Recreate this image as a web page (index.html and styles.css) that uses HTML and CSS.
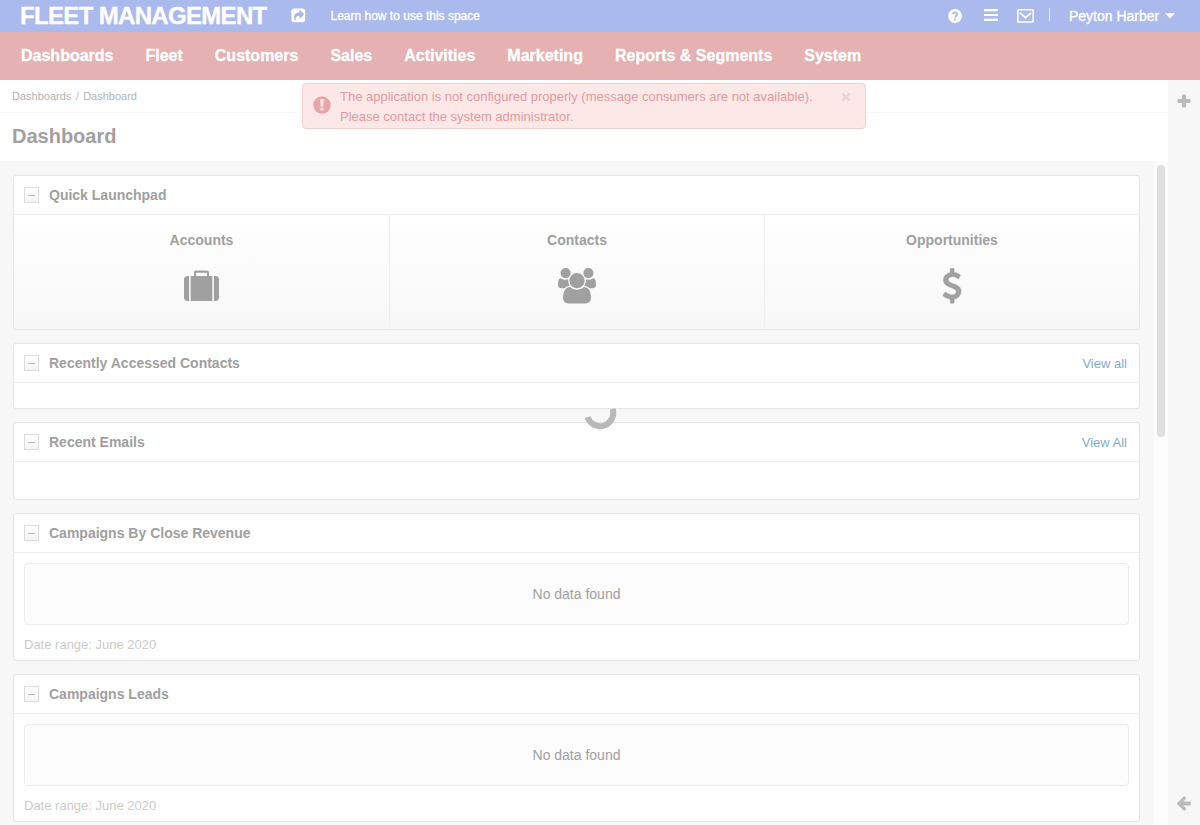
FILE: index.html
```html
<!DOCTYPE html>
<html lang="en">
<head>
<meta charset="utf-8">
<title>Dashboard - Fleet Management</title>
<link rel="stylesheet" href="styles.css">
</head>
<body>
<header class="topbar">
  <span class="brand">FLEET MANAGEMENT</span>
  <svg class="icon-share" width="15" height="15" viewBox="0 0 15 15"><path fill="#fff" fill-rule="evenodd" d="M3.200.5h8.200a2.800 2.800 0 0 1 2.800 2.800v8.200a2.800 2.800 0 0 1-2.800 2.800H3.200a2.800 2.800 0 0 1-2.800-2.800V3.300A2.800 2.800 0 0 1 3.200.5zM8.400 2.500v1.900C4.600 4.500 2.800 6.400 3 9.300c.1 1.500.7 2.500 1.700 3.100.4.200.6 0 .4-.4C4.200 9.400 5 8 8.400 7.900v2.200c0 .5.400.6.8.3l3.600-3.700c.3-.3.3-.6 0-.9L9.200 2.200c-.4-.3-.8-.2-.8.3z"/></svg>
  <a class="learn">Learn how to use this space</a>
  <div class="tools">
    <svg class="icon-help" width="14" height="14" viewBox="0 0 14 14"><circle cx="7" cy="7" r="6.900" fill="#fff"/><path d="M4.700 5.200C5.100 3.900 6 3.400 7.100 3.400c1.300 0 2.200.8 2.200 1.800 0 1.500-2.200 1.600-2.200 3.300" fill="none" stroke="#abbaed" stroke-width="1.800"/><path fill="#abbaed" d="M6.100 9.500h1.900v1.800H6.100z"/></svg>
    <svg class="icon-menu" width="14" height="12" viewBox="0 0 14 12"><path fill="#fff" d="M0 0h14v2.200H0zM0 4.900h14v2.200H0zM0 9.800h14V12H0z"/></svg>
    <svg class="icon-mail" width="17" height="14" viewBox="0 0 17 14"><rect x=".8" y=".8" width="15.400" height="12.200" rx=".8" fill="none" stroke="#fff" stroke-width="1.600"/><path d="M3 3.800l5.500 4.900L14 3.800" fill="none" stroke="#fff" stroke-width="1.800"/></svg>
    <span class="divider"></span>
    <a class="user">Peyton Harber</a>
    <svg class="icon-caret" width="10" height="6" viewBox="0 0 10 6"><path fill="#fff" d="M.8.300h8.400c.5 0 .6.500.3.800L5.500 5.100c-.3.300-.7.300-1 0L.5 1.100C.2.800.3.300.8.300z"/></svg>
  </div>
</header>
<nav class="nav">
  <a>Dashboards</a><a>Fleet</a><a>Customers</a><a>Sales</a><a>Activities</a><a>Marketing</a><a>Reports &amp; Segments</a><a>System</a>
</nav>
<div class="body">
  <main class="page">
    <div class="crumbs"><span>Dashboards</span><span>/</span><span>Dashboard</span></div>
    <h1 class="title">Dashboard</h1>
    <div class="scroll">
      <div class="widgets">
        <section class="card launchpad">
          <div class="card-head"><span class="toggle"></span><h2>Quick Launchpad</h2></div>
          <div class="tiles">
            <a class="tile"><span>Accounts</span>
              <svg width="36" height="36" viewBox="0.500 0 36 36"><g fill="#a0a0a0"><path d="M4.200 8H5.600V33H4.200A3.700 3.700 0 0 1 .5 29.300V11.700A3.700 3.700 0 0 1 4.200 8zM30.400 8h1.400a3.700 3.700 0 0 1 3.700 3.700v17.600a3.700 3.700 0 0 1-3.700 3.700h-1.400z"/><path fill-rule="evenodd" d="M7.200 8h3.300V4.300c0-1.100.8-1.900 1.900-1.900h11.200c1.100 0 1.900.8 1.900 1.900V8h3.300v25H7.200zM12.600 8h10.800V4.800H12.600z"/></g></svg></a>
            <a class="tile"><span>Contacts</span>
              <svg width="38" height="36" viewBox="0 0 1920 1818"><path fill="#a0a0a0" d="M593 896q-162 5-265 128h-134q-82 0-138-40.500t-56-118.500q0-353 124-353 6 0 43.500 21t97.500 42.500 119 21.500q67 0 133-23-5 37-5 66 0 139 81 256zm1071 637q0 120-73 189.500t-194 69.500h-874q-121 0-194-69.500t-73-189.500q0-53 3.500-103.500t14-109 26.500-108.500 43-97.500 62-81 85.500-53.500 111.500-20q10 0 43 21.500t73 48 107 48 135 21.500 135-21.500 107-48 73-48 43-21.500q61 0 111.500 20t85.500 53.500 62 81 43 97.500 26.500 108.500 14 109 3.500 103.500zm-1024-1277q0 106-75 181t-181 75-181-75-75-181 75-181 181-75 181 75 75 181zm704 384q0 159-112.500 271.500t-271.500 112.500-271.500-112.500-112.500-271.500 112.500-271.500 271.500-112.500 271.500 112.500 112.500 271.500zm576 225q0 78-56 118.500t-138 40.500h-134q-103-123-265-128 81-117 81-256 0-29-5-66 66 23 133 23 59 0 119-21.500t97.500-42.500 43.500-21q124 0 124 353zm-128-609q0 106-75 181t-181 75-181-75-75-181 75-181 181-75 181 75 75 181z"/></svg></a>
            <a class="tile"><span>Opportunities</span>
              <svg width="20" height="36" viewBox="0 0 1024 1818"><path fill="#a0a0a0" stroke="#a0a0a0" stroke-width="22" d="M978 1185q0 153-99.500 263.500t-258.500 136.500v175q0 14-9 23t-23 9h-135q-13 0-22.500-9.500t-9.500-22.500v-175q-66-9-127.500-31t-101.500-44.500-74-48-46.500-37.500-17.500-18q-17-21-2-41l103-135q7-10 23-12 15-2 24 9l2 2q113 99 243 125 37 8 74 8 81 0 142.500-43t61.500-122q0-28-15-53t-33.500-42-58.500-37.500-66-32-80-32.500q-39-16-61.500-25t-61.500-26.500-62.500-31-56.500-35.500-53.500-42.500-43.500-49-35.500-58-21-66.500-8.500-78q0-138 98-242t255-134v-180q0-13 9.500-22.500t22.500-9.500h135q14 0 23 9t9 23v176q57 6 110.500 23t87 33.500 63.500 37.500 39 29 15 14q17 18 5 38l-81 146q-8 15-23 16-14 3-27-7-3-3-14.500-12t-39-26.500-58.500-32-74.500-26-85.500-11.500q-95 0-155 43t-60 111q0 26 8.500 48t29.500 41.500 39.500 33 56 31 60.500 27 70 27.500q53 20 81 31.500t76 35 75.500 42.500 62 50 53 63.500 31.500 76.500 13 94z"/></svg></a>
          </div>
        </section>
        <section class="card contacts">
          <div class="card-head"><span class="toggle"></span><h2>Recently Accessed Contacts</h2><a class="view">View all</a></div>
        </section>
        <section class="card emails">
          <div class="card-head"><span class="toggle"></span><h2>Recent Emails</h2><a class="view">View All</a></div>
        </section>
        <section class="card chart">
          <div class="card-head"><span class="toggle"></span><h2>Campaigns By Close Revenue</h2></div>
          <div class="empty">No data found</div>
          <p class="range">Date range: June 2020</p>
        </section>
        <section class="card chart">
          <div class="card-head"><span class="toggle"></span><h2>Campaigns Leads</h2></div>
          <div class="empty">No data found</div>
          <p class="range">Date range: June 2020</p>
        </section>
      </div>
      <div class="track"><div class="thumb"></div></div>
    </div>
  </main>
  <aside class="side">
    <svg width="14" height="14" viewBox="0 0 14 14"><path fill="#bbb" d="M5.500.5h3a.5.500 0 0 1 .5.500v4h4a.5.500 0 0 1 .5.500v3a.5.500 0 0 1-.5.500H9v4a.5.500 0 0 1-.5.500h-3A.5.500 0 0 1 5 13V9H1a.5.500 0 0 1-.5-.5v-3A.5.500 0 0 1 1 5h4V1a.5.500 0 0 1 .5-.5z"/></svg>
    <svg width="14" height="15" viewBox="0 0 14 15"><path fill="#bbb" stroke="#bbb" stroke-width=".4" d="M6.600.7c.4-.4.900-.4 1.300 0l.8.800c.4.400.4.900 0 1.300L5.900 5.700h7c.5 0 .8.300.8.800v1.900c0 .5-.3.800-.8.800h-7l2.800 2.900c.4.400.4.900 0 1.300l-.8.800c-.4.400-.9.400-1.300 0L.5 8.200c-.4-.4-.4-.9 0-1.300z"/></svg>
  </aside>
</div>
<div class="alert">
  <svg class="icon-alert" width="18" height="18" viewBox="0 0 18 18"><circle cx="9" cy="9" r="8.700" fill="#eba5a9"/><path fill="#fde8e8" d="M7.300 3h3.400l-.3 7.400H7.600zM7.500 11.700h3v2.800h-3z"/></svg>
  <p>The application is not configured properly (message consumers are not available).<br>Please contact the system administrator.</p>
  <svg class="icon-close" width="10" height="10" viewBox="0 0 10 10"><path d="M1.300 1.300l7.400 7.400M8.700 1.300L1.300 8.700" stroke="#f0d3d4" stroke-width="2.500"/></svg>
</div>
<svg class="spinner" width="36" height="36" viewBox="0 0 36 36"><path d="M5.600 22.100A13 13 0 0 0 30.600 13.900" fill="none" stroke="#b8b8b8" stroke-width="6"/></svg>
</body>
</html>
```
FILE: styles.css
```css
* { box-sizing: border-box; }
body {
  margin: 0;
  height: 825px;
  overflow: hidden;
  display: flex;
  flex-direction: column;
  font: 13px/20px "Liberation Sans", Arial, sans-serif;
  color: #a0a0a0;
  background: #fff;
}
svg { display: block; flex: none; }
h1, h2, p { margin: 0; }

.topbar {
  flex: none;
  height: 32px;
  padding: 0 25px 0 20px;
  display: flex;
  align-items: center;
  background: #abbaed;
  color: #fff;
  white-space: nowrap;
}
.brand {
  width: 271px;
  font-size: 24px;
  font-weight: bold;
  letter-spacing: -0.67px;
  -webkit-text-stroke: 0.3px #fff;
}
.icon-share { margin-right: 24.5px; margin-top: -1px; }
.learn { font-size: 12px; -webkit-text-stroke: 0.3px #fff; }
.tools { margin-left: auto; display: flex; align-items: center; }
.icon-help { margin-right: 22px; margin-top: -1px; }
.icon-menu { margin-right: 19px; margin-top: -2px; }
.icon-mail { margin-right: 15px; margin-top: -1px; }
.divider { width: 1px; height: 13px; margin: -3px 19px 0 0; background: #e3e8fa; }
.user { width: 96px; font-size: 14px; -webkit-text-stroke: 0.3px #fff; }
.icon-caret { margin-top: -1px; }

.nav {
  flex: none;
  height: 48px;
  padding: 0 21px;
  display: flex;
  align-items: center;
  gap: 32px;
  background: #e5b1b2;
  color: #fff;
  font-size: 16px;
  font-weight: bold;
  white-space: nowrap;
  -webkit-text-stroke: 0.3px #fff;
}

.body { flex: 1; min-height: 0; display: flex; }
.page { flex: 1; display: flex; flex-direction: column; min-width: 0; }
.crumbs {
  flex: none;
  height: 33px;
  padding-left: 12px;
  display: flex;
  align-items: center;
  gap: 4.4px;
  border-bottom: 1px solid #f7f7f7;
  font-size: 11px;
  color: #b4b4b4;
}
.title {
  flex: none;
  height: 48px;
  padding-left: 12px;
  font-size: 20px;
  line-height: 46px;
}
.scroll { flex: 1; min-height: 0; display: flex; background: #f7f7f7; }
.widgets {
  flex: 1;
  padding: 14px 14px 0 13px;
  display: flex;
  flex-direction: column;
  gap: 13px;
}
.track { width: 14px; padding: 4px 3px 0; background: #fcfcfc; }
.thumb { height: 272px; border-radius: 4px; background: #dfdfdf; }
.side {
  width: 32px;
  padding: 14px 0 14px;
  display: flex;
  flex-direction: column;
  align-items: center;
  justify-content: space-between;
  background: #f7f7f7;
}

.card {
  flex: none;
  border: 1px solid #e5e5e5;
  border-radius: 3px;
  background: #fff;
  overflow: hidden;
}
.launchpad { height: 155px; }
.contacts { height: 66px; }
.emails { height: 78px; }
.chart { height: 148px; }
.card-head {
  height: 39px;
  padding: 0 12px 0 10px;
  display: flex;
  align-items: center;
  border-bottom: 1px solid #ececec;
}
.card-head h2 { font-size: 14px; }
.toggle {
  width: 15px;
  height: 16px;
  margin-right: 10px;
  display: flex;
  align-items: center;
  justify-content: center;
  border: 1px solid #dcdcdc;
  background: linear-gradient(#fff, #f4f4f4);
}
.toggle::before { content: ""; width: 7px; height: 1px; background: #b8b8b8; }
.view { margin-left: auto; padding-top: 2px; color: #82adc6; }

.tiles { height: 114px; display: grid; grid-template-columns: repeat(3, 1fr); }
.tile {
  padding-top: 15px;
  display: flex;
  flex-direction: column;
  align-items: center;
  gap: 18px;
  background: linear-gradient(#fff, #f7f7f7);
  font-size: 14px;
  font-weight: bold;
}
.tile + .tile { border-left: 1px solid #f0f0f0; }

.empty {
  height: 62px;
  margin: 10px 10px 0;
  display: flex;
  align-items: center;
  justify-content: center;
  border: 1px solid #ececec;
  border-radius: 4px;
  background: #fcfcfc;
  font-size: 14px;
}
.range { padding: 10px 10px 0; color: #ccc; }

.alert {
  position: absolute;
  left: 302px;
  top: 83px;
  width: 564px;
  height: 46px;
  padding: 3px 14px 0 10px;
  display: flex;
  border: 1px solid #f6cfd1;
  border-radius: 4px;
  background: #fde8e8;
  color: #e39a9f;
  white-space: nowrap;
}
.alert p { margin-left: 9px; }
.icon-alert { margin-top: 9px; }
.icon-close { margin: 5px 0 0 auto; }
.spinner { position: absolute; left: 582px; top: 395px; }
```
